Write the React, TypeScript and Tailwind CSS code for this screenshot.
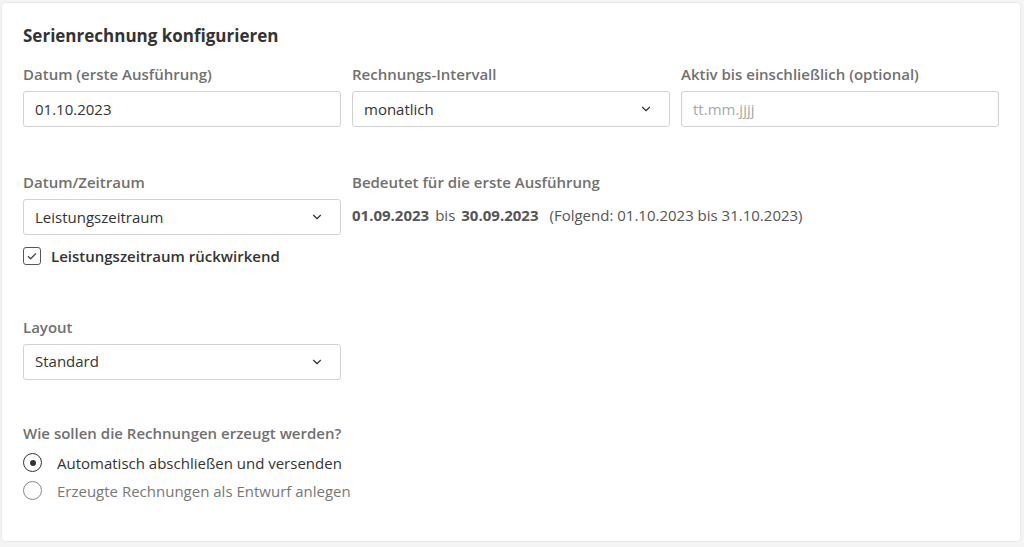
import { ChevronDown } from 'lucide-react'

function Label({ children }: { children: React.ReactNode }) {
  return <div className="mb-[6px] text-[15px] font-semibold leading-[22px] text-[#707070]">{children}</div>
}

function Box({ children, select, muted }: { children: React.ReactNode; select?: boolean; muted?: boolean }) {
  return (
    <div className="flex h-[36px] items-center justify-between rounded-[3px] border border-[#d2d2d2] bg-white pl-[11px] pr-[16px]">
      <span className={muted ? 'text-[15px] text-[#a8a8a8]' : 'text-[15px] text-[#333]'}>{children}</span>
      {select ? <ChevronDown size={14} strokeWidth={2} className="text-[#333]" /> : null}
    </div>
  )
}

export default function App() {
  return (
    <div className="h-[547px] w-[1024px] bg-[#f4f4f4] pl-[2px] pr-[4px] pt-[3px]" style={{ fontFamily: '"Open Sans", sans-serif' }}>
      <div className="h-[538px] rounded-[3px] bg-white px-[21px] pt-[21px] shadow-[0_0_2px_rgba(0,0,0,0.15)]">
        <h2 className="text-[17px] font-bold leading-[24px] text-[#333]">Serienrechnung konfigurieren</h2>
        <div className="mt-[15px] grid grid-cols-[318px_318px_318px] gap-x-[11px]">
          <div>
            <Label>Datum (erste Ausführung)</Label>
            <Box>01.10.2023</Box>
          </div>
          <div>
            <Label>Rechnungs-Intervall</Label>
            <Box select>monatlich</Box>
          </div>
          <div>
            <Label>Aktiv bis einschließlich (optional)</Label>
            <Box muted>tt.mm.jjjj</Box>
          </div>
        </div>
        <div className="mt-[44px] grid grid-cols-[318px_636px] gap-x-[11px]">
          <div>
            <Label>Datum/Zeitraum</Label>
            <Box select>Leistungszeitraum</Box>
            <label className="mt-[10px] flex items-center gap-[10px]">
              <span className="flex h-[18px] w-[18px] items-center justify-center rounded-[3px] border border-[#555]">
                <svg width="12" height="12" viewBox="0 0 12 12" fill="none">
                  <path d="M2 6.2l2.6 2.6L10 3.4" stroke="#444" strokeWidth="1.3" />
                </svg>
              </span>
              <span className="text-[15px] font-semibold text-[#333]">Leistungszeitraum rückwirkend</span>
            </label>
          </div>
          <div>
            <Label>Bedeutet für die erste Ausführung</Label>
            <div className="flex h-[32px] items-center text-[15px] text-[#555]">
              <span className="font-bold">01.09.2023</span>
              <span className="ml-[6px]">bis</span>
              <span className="ml-[6px] font-bold">30.09.2023</span>
              <span className="ml-[11px]">(Folgend: 01.10.2023 bis 31.10.2023)</span>
            </div>
          </div>
        </div>
        <div className="mt-[48px] w-[318px]">
          <Label>Layout</Label>
          <Box select>Standard</Box>
        </div>
        <div className="mt-[42px]">
          <Label>Wie sollen die Rechnungen erzeugt werden?</Label>
          <div className="mt-[9px] flex flex-col gap-[8px]">
            <label className="flex items-center gap-[15px]">
              <span className="flex h-[19px] w-[19px] items-center justify-center rounded-full border border-[#333]">
                <span className="h-[6px] w-[6px] rounded-full bg-[#333]" />
              </span>
              <span className="text-[15px] leading-[20px] text-[#333]">Automatisch abschließen und versenden</span>
            </label>
            <label className="flex items-center gap-[15px]">
              <span className="h-[19px] w-[19px] rounded-full border border-[#888]" />
              <span className="text-[15px] leading-[20px] text-[#777]">Erzeugte Rechnungen als Entwurf anlegen</span>
            </label>
          </div>
        </div>
      </div>
    </div>
  )
}
